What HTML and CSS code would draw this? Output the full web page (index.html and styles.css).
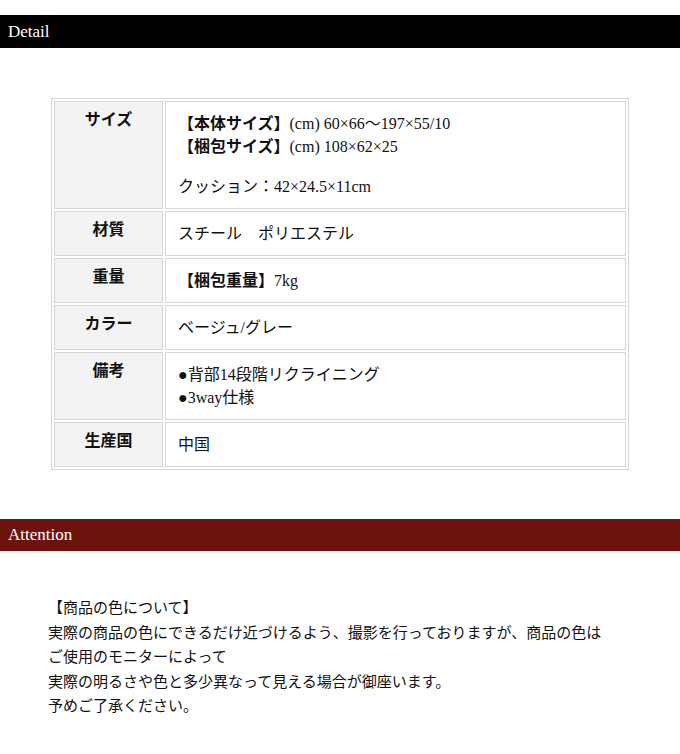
FILE: index.html
```html
<html lang="ja">
  <head>
    <meta charset="UTF-8" />
    <title>Detail</title>
    <link rel="stylesheet" href="styles.css">
  </head>
  <body>
    <h2 class="bar bar-detail">Detail</h2>
    <table class="spec">
      <tr>
        <th>サイズ</th>
        <td>
          <b>【本体サイズ】</b>(cm) 60×66〜197×55/10<br>
          <b>【梱包サイズ】</b>(cm) 108×62×25
          <p class="sub">クッション：42×24.5×11cm</p>
        </td>
      </tr>
      <tr>
        <th>材質</th>
        <td>スチール　ポリエステル</td>
      </tr>
      <tr>
        <th>重量</th>
        <td><b>【梱包重量】</b>7kg</td>
      </tr>
      <tr>
        <th>カラー</th>
        <td>ベージュ/グレー</td>
      </tr>
      <tr>
        <th>備考</th>
        <td>●背部14段階リクライニング<br>●3way仕様</td>
      </tr>
      <tr>
        <th>生産国</th>
        <td>中国</td>
      </tr>
    </table>

    <h2 class="bar bar-attention">Attention</h2>
    <p class="note">
      【商品の色について】<br>
      実際の商品の色にできるだけ近づけるよう、撮影を行っておりますが、商品の色は<br>
      ご使用のモニターによって<br>
      実際の明るさや色と多少異なって見える場合が御座います。<br>
      予めご了承ください。
    </p>
  </body>
</html>
```

FILE: styles.css
```css
html,
body {
  margin: 0;
  padding: 0;
}
body {
  font-family: "Liberation Serif", "Noto Sans CJK JP", serif;
  font-size: 15px;
  color: #111;
  background: #fff;
}
/* Section title bars */
.bar {
  margin: 15px 0 0;
  height: 33px;
  line-height: 33px;
  padding: 0 8px;
  font-size: 17px;
  font-weight: normal;
  color: #fff;
}
.bar-detail {
  background: #000;
}
.bar-attention {
  margin-top: 49px;
  height: 32px;
  line-height: 32px;
  background: #6d130e;
}
/* Spec table */
.spec {
  width: 85%;
  margin: 50px auto 0;
  border: 1px solid #d6d6d6;
  border-spacing: 2px;
}
.spec th,
.spec td {
  border: 1px solid #d6d6d6;
  padding: 10px 12px;
  line-height: 23px;
  vertical-align: top;
  text-align: left;
}
.spec th {
  width: 83px;
  padding-top: 6px;
  background: #f3f3f3;
  text-align: center;
  font-weight: bold;
}
.spec td b {
  font-weight: bold;
}
.spec .sub {
  margin: 17px 0 0;
}
/* Notes */
.note {
  margin: 45px 0 0 48px;
  line-height: 24.5px;
}
```
